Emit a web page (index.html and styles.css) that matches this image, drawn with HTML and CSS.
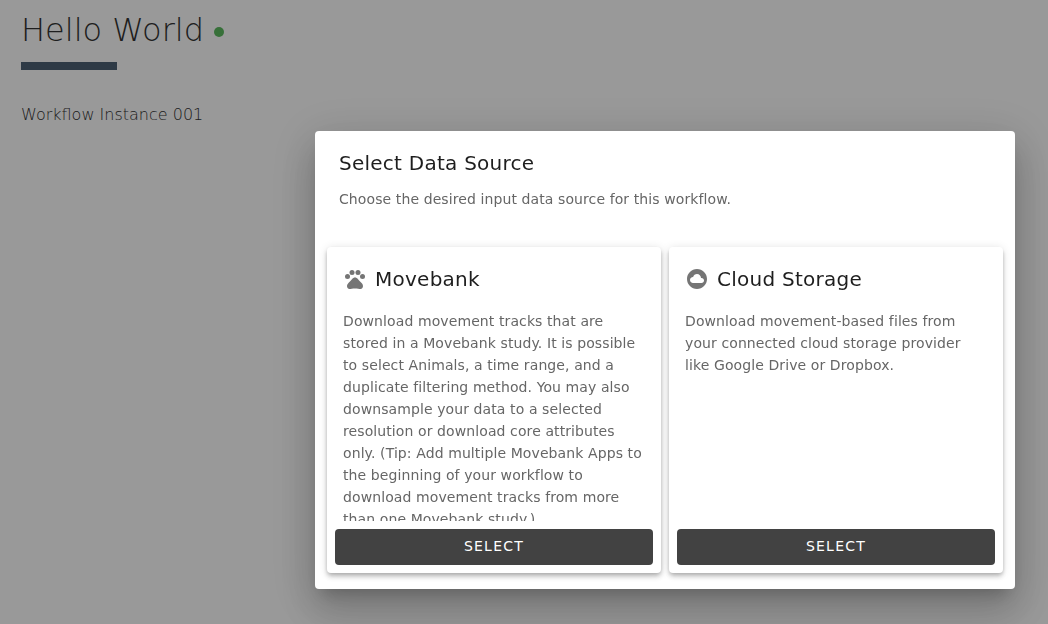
FILE: index.html
```html
<!DOCTYPE html>
<html lang="en">
<head>
<meta charset="utf-8">
<title>Hello World</title>
<link rel="stylesheet" href="styles.css">
</head>
<body>
<main class="page">
  <h1 class="title">Hello World <span class="status"></span></h1>
  <div class="rule"></div>
  <p class="instance">Workflow Instance 001</p>
</main>
<div class="overlay">
  <section class="dialog" role="dialog" aria-labelledby="dialog-title">
    <header class="dialog-head">
      <h2 class="heading" id="dialog-title">Select Data Source</h2>
      <p class="text">Choose the desired input data source for this workflow.</p>
    </header>
    <div class="cards">
      <article class="card">
        <h3 class="heading card-title">
          <svg class="icon" viewBox="0 0 24 24" aria-hidden="true"><circle cx="4.5" cy="9.5" r="2.5"/><circle cx="9" cy="5.5" r="2.5"/><circle cx="15" cy="5.5" r="2.5"/><circle cx="19.5" cy="9.5" r="2.5"/><path d="M17.34 14.86c-.87-1.02-1.6-1.89-2.48-2.91-.46-.54-1.05-1.08-1.75-1.32-.11-.04-.22-.07-.33-.09-.25-.04-.52-.04-.78-.04s-.53 0-.79.05c-.11.02-.22.05-.33.09-.7.24-1.28.78-1.75 1.32-.87 1.02-1.6 1.89-2.48 2.91-1.31 1.31-2.92 2.76-2.62 4.79.29 1.02 1.02 2.03 2.33 2.32.73.15 3.06-.44 5.54-.44h.18c2.48 0 4.81.58 5.54.44 1.31-.29 2.04-1.31 2.33-2.32.31-2.04-1.3-3.49-2.61-4.8z"/></svg>
          Movebank
        </h3>
        <p class="text card-text">Download movement tracks that are stored in a Movebank study. It is possible to select Animals, a time range, and a duplicate filtering method. You may also downsample your data to a selected resolution or download core attributes only. (Tip: Add multiple Movebank Apps to the beginning of your workflow to download movement tracks from more than one Movebank study.)</p>
        <button class="select" type="button">SELECT</button>
      </article>
      <article class="card">
        <h3 class="heading card-title">
          <svg class="icon" viewBox="0 0 24 24" aria-hidden="true"><path d="M12 2C6.48 2 2 6.48 2 12s4.48 10 10 10 10-4.48 10-10S17.52 2 12 2zm4.5 14H8c-1.66 0-3-1.34-3-3s1.34-3 3-3l.14.01C8.58 8.28 10.13 7 12 7c2.21 0 4 1.79 4 4h.5c1.38 0 2.5 1.12 2.5 2.5S17.88 16 16.5 16z"/></svg>
          Cloud Storage
        </h3>
        <p class="text card-text">Download movement-based files from your connected cloud storage provider like Google Drive or Dropbox.</p>
        <button class="select" type="button">SELECT</button>
      </article>
    </div>
  </section>
</div>
</body>
</html>
```
FILE: styles.css
```css
* { box-sizing: border-box; }
body {
  margin: 0;
  min-height: 100vh;
  background: #fff;
  font-family: "DejaVu Sans", sans-serif;
}
h1, h2, h3, p { margin: 0; }
.page { padding: 8px 21px; }
.title {
  display: flex;
  align-items: center;
  gap: 10px;
  color: #333;
  font-size: 32px;
  font-weight: 200;
  line-height: 44px;
}
.status {
  width: 10px;
  height: 10px;
  margin-top: 4px;
  border-radius: 50%;
  background: #5cbb60;
}
.rule {
  width: 96px;
  height: 8px;
  margin-top: 10px;
  background: #4e6276;
}
.instance {
  margin-top: 33px;
  color: #333;
  font-size: 16px;
  font-weight: 200;
  line-height: 24px;
}
.overlay {
  position: fixed;
  inset: 0;
  display: flex;
  align-items: flex-start;
  justify-content: flex-end;
  padding: 131px 33px 35px;
  background: rgba(0, 0, 0, .4);
}
.dialog {
  width: 100%;
  max-width: 700px;
  padding: 16px 12px;
  border-radius: 4px;
  background: #fff;
  box-shadow: 0 11px 15px -7px rgba(0, 0, 0, .2), 0 24px 38px 3px rgba(0, 0, 0, .14), 0 9px 46px 8px rgba(0, 0, 0, .12);
}
.dialog-head { padding: 0 12px; }
.heading {
  color: #1e1e1e;
  font-size: 20px;
  font-weight: 400;
  line-height: 32px;
  letter-spacing: .0125em;
}
.text {
  color: #666;
  font-size: 14px;
  line-height: 22px;
  letter-spacing: .007em;
}
.dialog-head .text { margin-top: 9px; }
.cards {
  display: flex;
  gap: 8px;
  margin-top: 37px;
}
.card {
  display: flex;
  flex: 1;
  flex-direction: column;
  padding: 8px;
  border-radius: 4px;
  background: #fff;
  box-shadow: 0 2px 4px -1px rgba(0, 0, 0, .2), 0 4px 5px 0 rgba(0, 0, 0, .14), 0 1px 10px 0 rgba(0, 0, 0, .12);
}
.card-title {
  display: flex;
  align-items: center;
  gap: 8px;
  padding: 8px 8px 0;
}
.icon {
  width: 24px;
  height: 24px;
  fill: #757575;
}
.card-text {
  height: 211px;
  margin-top: 15px;
  padding: 0 8px;
  overflow: hidden;
}
.select {
  height: 36px;
  margin-top: 8px;
  padding: 0 0 2px;
  border: 0;
  border-radius: 4px;
  background: #424242;
  color: #fff;
  font: 400 14px/34px "DejaVu Sans", sans-serif;
  letter-spacing: .0892em;
}
```
